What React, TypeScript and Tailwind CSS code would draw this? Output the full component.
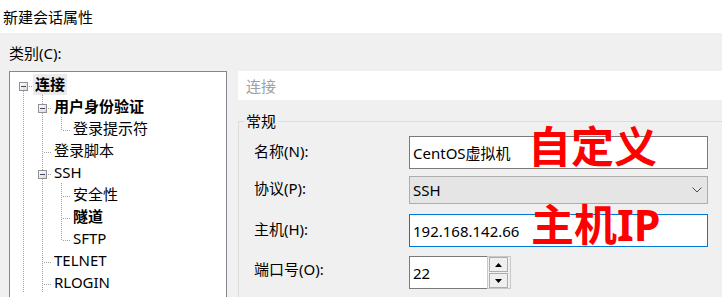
import React from "react";

type Kind = "blank" | "line" | "tee" | "ell" | "exp";

function Cell({ kind, up = false, down = false }: { kind: Kind; up?: boolean; down?: boolean }) {
  const c = "#a0a0a0";
  const dash = "1 1";
  return (
    <svg width="19" height="22" className="block shrink-0" viewBox="0 0 19 22">
      {kind === "line" && <line x1="9.5" y1="0" x2="9.5" y2="22" stroke={c} strokeDasharray={dash} />}
      {kind === "tee" && (
        <>
          <line x1="9.5" y1="0" x2="9.5" y2="22" stroke={c} strokeDasharray={dash} />
          <line x1="11" y1="13.5" x2="19" y2="13.5" stroke={c} strokeDasharray={dash} />
        </>
      )}
      {kind === "ell" && (
        <>
          <line x1="9.5" y1="0" x2="9.5" y2="14" stroke={c} strokeDasharray={dash} />
          <line x1="11" y1="13.5" x2="19" y2="13.5" stroke={c} strokeDasharray={dash} />
        </>
      )}
      {kind === "exp" && (
        <>
          {up && <line x1="9.5" y1="0" x2="9.5" y2="9" stroke={c} strokeDasharray={dash} />}
          {down && <line x1="9.5" y1="18" x2="9.5" y2="22" stroke={c} strokeDasharray={dash} />}
          <line x1="15" y1="13.5" x2="19" y2="13.5" stroke={c} strokeDasharray={dash} />
          <defs>
            <linearGradient id="expg" x1="0" y1="0" x2="1" y2="1">
              <stop offset="0" stopColor="#ffffff" />
              <stop offset="1" stopColor="#d8d8d8" />
            </linearGradient>
          </defs>
          <rect x="5.5" y="9.5" width="8" height="8" fill="url(#expg)" stroke="#919191" />
          <line x1="7" y1="13.5" x2="12" y2="13.5" stroke="#3a4a66" />
        </>
      )}
    </svg>
  );
}

type Row = { cells: { kind: Kind; up?: boolean; down?: boolean }[]; label: string; bold?: boolean; selected?: boolean };

const rows: Row[] = [
  { cells: [{ kind: "exp", down: true }], label: "连接", bold: true, selected: true },
  { cells: [{ kind: "line" }, { kind: "exp", up: true, down: true }], label: "用户身份验证", bold: true },
  { cells: [{ kind: "line" }, { kind: "line" }, { kind: "ell" }], label: "登录提示符" },
  { cells: [{ kind: "line" }, { kind: "tee" }], label: "登录脚本" },
  { cells: [{ kind: "line" }, { kind: "exp", up: true, down: true }], label: "SSH" },
  { cells: [{ kind: "line" }, { kind: "line" }, { kind: "tee" }], label: "安全性" },
  { cells: [{ kind: "line" }, { kind: "line" }, { kind: "tee" }], label: "隧道", bold: true },
  { cells: [{ kind: "line" }, { kind: "line" }, { kind: "ell" }], label: "SFTP" },
  { cells: [{ kind: "line" }, { kind: "tee" }], label: "TELNET" },
  { cells: [{ kind: "line" }, { kind: "tee" }], label: "RLOGIN" },
];

export default function App() {
  return (
    <div className="relative w-[722px] h-[297px] overflow-hidden flex flex-col bg-[#f0f0f0] text-black text-[15px] font-['Noto_Sans','Noto_Sans_CJK_SC',sans-serif]">
      <div className="h-[33px] shrink-0 bg-white flex items-center pl-[3px] leading-[20px]">新建会话属性</div>
      <div className="flex-1 flex flex-col pl-[9px] pt-[10px]">
        <div className="leading-[20px] h-[20px]">类别(C):</div>
        <div className="mt-[8px] flex items-start">
          <div className="w-[218px] h-[240px] shrink-0 border border-[#828790] bg-white pl-[4px] pt-[1px] flex flex-col">
            {rows.map((r, i) => (
              <div key={i} className="h-[22px] flex items-stretch">
                {r.cells.map((c, j) => (
                  <Cell key={j} kind={c.kind} up={c.up} down={c.down} />
                ))}
                <div
                  className={
                    "px-[2px] leading-[21px] h-[21px] mt-[1px] whitespace-nowrap " +
                    (r.bold ? "font-bold " : "") +
                    (r.selected ? "bg-[#ebebeb]" : "")
                  }
                >
                  {r.label}
                </div>
              </div>
            ))}
          </div>
          <div className="ml-[11px] w-[500px] shrink-0 flex flex-col">
            <div className="h-[29px] bg-white flex items-center pl-[8px] text-[#a0a0a0] leading-[20px]">连接</div>
            <fieldset className="mt-[11px] border border-[#dcdcdc] h-[200px] m-0 p-0">
              <legend className="ml-[5px] px-[2px] leading-[20px]">常规</legend>
              <div className="flex flex-col pl-[15px] pt-[5px]">
                <div className="flex items-center h-[33px]">
                  <div className="w-[155px] pb-[4px] leading-[20px]">名称(N):</div>
                  <div className="w-[299px] h-[33px] border border-[#7a7a7a] bg-white flex items-center pl-[3px] leading-[20px]">
                    CentOS虚拟机
                  </div>
                </div>
                <div className="flex items-center h-[28px] mt-[7px]">
                  <div className="w-[155px] pb-[4px] leading-[20px]">协议(P):</div>
                  <div className="w-[299px] h-[28px] border border-[#adadad] bg-[#e5e5e5] flex items-center justify-between pl-[3px] pr-[5px] leading-[20px]">
                    <span>SSH</span>
                    <svg width="10" height="6" viewBox="0 0 10 6" className="block">
                      <polyline points="0.5,0.5 5,5 9.5,0.5" fill="none" stroke="#4d4d4d" strokeWidth="1" />
                    </svg>
                  </div>
                </div>
                <div className="flex items-center h-[33px] mt-[10px]">
                  <div className="w-[155px] pb-[4px] leading-[20px]">主机(H):</div>
                  <div className="w-[299px] h-[33px] border border-[#0078d7] bg-white flex items-center pl-[3px] leading-[20px]">
                    192.168.142.66
                  </div>
                </div>
                <div className="flex items-center h-[33px] mt-[9px]">
                  <div className="w-[155px] pb-[7px] leading-[20px]">端口号(O):</div>
                  <div className="w-[78px] h-[33px] border border-r-0 border-[#7a7a7a] bg-white flex items-center pl-[3px] leading-[20px]">
                    22
                  </div>
                  <div className="w-[24px] h-[33px] border border-[#c8c8c8] flex flex-col gap-[1px] pl-[1px] pr-[2px]">
                    <div className="flex-1 border border-[#adadad] bg-[#efefef] flex items-center justify-center">
                      <svg width="7" height="4" viewBox="0 0 7 4" className="block">
                        <polygon points="3.5,0 7,4 0,4" fill="#000" />
                      </svg>
                    </div>
                    <div className="flex-1 border border-[#adadad] bg-[#efefef] flex items-center justify-center">
                      <svg width="7" height="4" viewBox="0 0 7 4" className="block">
                        <polygon points="0,0 7,0 3.5,4" fill="#000" />
                      </svg>
                    </div>
                  </div>
                </div>
              </div>
            </fieldset>
          </div>
        </div>
      </div>
      <div className="absolute left-[528px] top-[125px] text-[43px] leading-[43px] font-bold text-[#ff0000] whitespace-nowrap">自定义</div>
      <div className="absolute left-[531px] top-[203px] text-[43px] leading-[43px] font-bold text-[#ff0000] whitespace-nowrap">主机IP</div>
    </div>
  );
}
